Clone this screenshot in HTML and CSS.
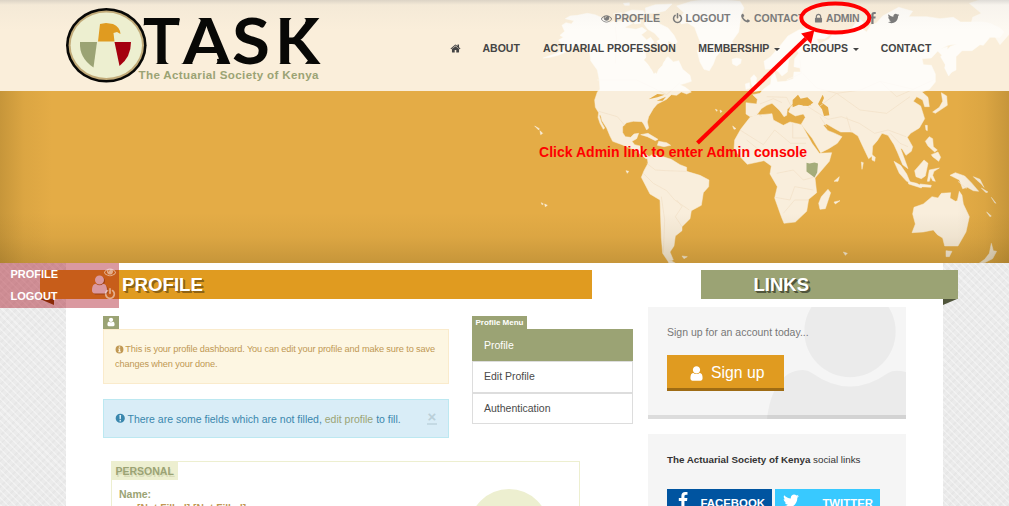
FILE: index.html
```html
<!DOCTYPE html>
<html lang="en">
<head>
<meta charset="utf-8">
<title>TASK - The Actuarial Society of Kenya</title>
<link rel="stylesheet" href="styles.css">
</head>
<body>
<svg class="defs" width="0" height="0">
  <symbol id="user" viewBox="0 0 1792 1792"><path d="M1536 1399q0 109-62.500 187t-150.500 78h-854q-88 0-150.500-78t-62.500-187q0-85 8.500-160.500t31.500-152 58.500-131 94-89 134.500-34.500q131 128 313 128t313-128q76 0 134.500 34.500t94 89 58.500 131 31.500 152 8.500 160.500zm-256-887q0 159-112.500 271.500t-271.500 112.500-271.500-112.500-112.500-271.500 112.500-271.500 271.500-112.500 271.500 112.500 112.500 271.500z"/></symbol>
  <symbol id="facebook" viewBox="0 0 1792 1792"><path d="M1343 12v264h-157q-86 0-116 36t-30 108v189h293l-39 296h-254v759h-306v-759h-255v-296h255v-218q0-186 104-288.500t277-102.500q147 0 228 12z"/></symbol>
  <symbol id="twitter" viewBox="0 0 1792 1792"><path d="M1684 408q-67 98-162 167 1 14 1 42 0 130-38 259.500t-115.500 248.500-184.500 210.500-258 146-323 54.500q-271 0-496-145 35 4 78 4 225 0 401-138-105-2-188-64.500t-114-159.500q33 5 61 5 43 0 85-11-112-23-185.500-111.500t-73.500-205.500v-4q68 38 146 41-66-44-105-115t-39-154q0-88 44-163 121 149 294.500 238.500t371.500 99.500q-8-38-8-74 0-134 94.500-228.500t228.500-94.500q140 0 236 102 109-21 205-78-37 115-142 178 93-10 186-50z"/></symbol>
  <symbol id="lock" viewBox="0 0 1792 1792"><path d="M640 768h512v-192q0-106-75-181t-181-75-181 75-75 181v192zm832 96v576q0 40-28 68t-68 28h-960q-40 0-68-28t-28-68v-576q0-40 28-68t68-28h32v-192q0-184 132-316t316-132 316 132 132 316v192h32q40 0 68 28t28 68z"/></symbol>
  <symbol id="power" viewBox="0 0 1792 1792"><path d="M1664 896q0 156-61 298t-164 245-245 164-298 61-298-61-245-164-164-245-61-298q0-182 80.500-343t226.500-270q43-32 95.500-25t83.500 50q32 42 24.500 94.500t-49.500 84.500q-98 74-151.500 181t-53.500 228q0 104 40.500 198.500t109.500 163.500 163.500 109.500 198.500 40.500 198.500-40.500 163.500-109.500 109.500-163.500 40.500-198.500q0-121-53.500-228t-151.500-181q-42-32-49.500-84.500t24.500-94.500q31-43 84-50t95 25q146 109 226.500 270t80.500 343zm-640-768v640q0 52-38 90t-90 38-90-38-38-90v-640q0-52 38-90t90-38 90 38 38 90z"/></symbol>
  <symbol id="eye" viewBox="0 0 1792 1792"><path d="M1664 960q-152-236-381-353 61 104 61 225 0 185-131.500 316.500t-316.500 131.500-316.500-131.500-131.500-316.500q0-121 61-225-229 117-381 353 133 205 333.500 326.500t434.500 121.500 434.500-121.500 333.500-326.500zm-720-384q0-20-14-34t-34-14q-125 0-214.500 89.500t-89.500 214.500q0 20 14 34t34 14 34-14 14-34q0-86 61-147t147-61q20 0 34-14t14-34zm848 384q0 34-20 69-140 230-376.500 368.500t-499.500 138.500-499.500-139-376.500-368q-20-35-20-69t20-69q140-229 376.500-368t499.500-139 499.500 139 376.500 368q20 35 20 69z"/></symbol>
  <symbol id="home" viewBox="0 0 1792 1792"><path d="M1472 992v480q0 26-19 45t-45 19h-384v-384h-256v384h-384q-26 0-45-19t-19-45v-480q0-1 .5-3t.5-3l575-474 575 474q1 2 1 6zm223-69l-62 74q-8 9-21 11h-3q-13 0-21-7l-692-577-692 577q-12 8-24 7-13-2-21-11l-62-74q-8-10-7-23.500t11-21.500l719-599q32-26 76-26t76 26l244 204v-195q0-14 9-23t23-9h192q14 0 23 9t9 23v408l219 182q10 8 11 21.500t-7 23.500z"/></symbol>
  <symbol id="phone" viewBox="0 0 1792 1792"><path d="M1600 1240q0 27-10 70.500t-21 68.500q-21 50-122 106-94 51-186 51-27 0-53-3.500t-57.500-12.500-47-14.500-55.500-20.500-49-18q-98-35-175-83-127-79-264-216t-216-264q-48-77-83-175-3-9-18-49t-20.500-55.500-14.500-47-12.500-57.500-3.500-53q0-92 51-186 56-101 106-122 25-11 68.500-21t70.500-10q14 0 21 3 18 6 53 76 11 19 30 54t35 63.500 31 53.500q3 4 17.500 25t21.500 35.500 7 28.500q0 20-28.500 50t-62 55-62 53-28.500 46q0 9 5 22.500t8.500 20.500 14 24 11.500 19q76 137 174 235t235 174q2 1 19 11.500t24 14 20.500 8.500 22.500 5q18 0 46-28.500t53-62 55-62 50-28.500q14 0 28.500 7t35.500 21.500 25 17.500q25 15 53.500 31t63.500 35 54 30q70 35 76 53 3 7 3 21z"/></symbol>
  <symbol id="info" viewBox="0 0 16 16"><path fill-rule="evenodd" d="M8 1a7 7 0 1 0 0 14A7 7 0 0 0 8 1zM6.800 2.800h2.400v2.200H6.800zM5.800 6.200h3.500v5h1v1.700H5.800v-1.700h1V7.800h-1z"/></symbol>
  <symbol id="alert" viewBox="0 0 16 16"><path fill-rule="evenodd" d="M8 1a7 7 0 1 0 0 14A7 7 0 0 0 8 1zM6.700 3h2.600l-.3 6H7zM6.900 10.400h2.200v2.400H6.900z"/></symbol>
</svg>

<header class="hero">
  <svg class="map" viewBox="0 0 1009 263">
    <g transform="translate(500 0) scale(.33333)" fill="#f9eedc" stroke="#f9eedc" stroke-width="1.500" stroke-linejoin="round">
      <path d="M186 76L198 68L214 72L222 62L196 56L210 48L232 46L262 40L285 44L316 58L330 68L342 62L352 72L380 84L408 88L426 82L440 92L424 104L440 120L452 112L462 126L450 142L436 158L440 186L452 206L470 222L476 208L488 196L492 180L504 170L520 186L536 182L548 208L570 226L574 244L556 250L540 254L556 262L574 276L560 282L544 276L530 286L514 284L500 298L472 312L460 326L446 350L442 366L446 384L440 390L432 374L426 365L400 364L380 368L368 380L368 398L376 410L392 412L402 402L416 400L410 416L396 424L404 434L420 438L426 458L442 466L450 474L438 476L420 462L404 450L380 440L366 434L338 424L330 408L320 384L306 362L302 346L298 346L304 366L314 384L310 388L300 370L294 352L296 338L286 322L284 300L292 276L300 268L298 240L292 210L272 182L270 162L262 142L246 134L234 136L218 142L198 156L174 166L150 172L130 174L174 158L198 144L188 136L176 120L190 112L180 106L194 94Z"/>
      <path d="M340 42l24-4 8 12-20 8zM374 38l22-8 34 2 6 14-20 4-14-8-14 6zM436 24l30-10 50-2-20 20-30 8-28 0zM350 66l30-6 18 10-24 12-18-2zM400 60l20-2 2 12-18 2zM444 56l20 2 16 14 24 12 18 22 10 20-8 8-20-12 0 16-22-2-12-12 10-6-16-18-20-12-12-16z"/>
      <path d="M530 18L575 4L640 -4L720 4L732 24L724 44L720 68L716 96L696 124L700 132L668 148L648 170L640 192L628 212L612 208L600 186L592 154L602 130L592 104L584 82L562 68L544 72L536 56L552 38Z"/>
      <path d="M696 178l14-4 14 4-2 12-12 8-12-6zM752 234l10-10 8 10-2 12 10 14 0 12-20 4-6-4 8-10-6-10zM736 252l12-4 2 16-12 4z"/>
      <path d="M738 308L770 312L772 298L758 284L780 280L790 268L812 252L814 232L824 220L832 246L858 244L880 236L882 216L902 216L900 204L882 200L884 176L896 160L888 144L866 180L862 216L846 228L834 214L820 206L796 208L792 184L812 170L838 140L864 108L896 90L924 84L946 98L990 104L974 116L950 116L956 132L986 118L1002 98L1040 92L1056 84L1076 56L1090 66L1084 84L1100 96L1112 76L1130 68L1148 48L1196 22L1238 34L1226 50L1280 50L1320 56L1360 52L1382 66L1448 66L1470 70L1500 84L1512 96L1500 112L1470 112L1450 136L1440 134L1416 152L1386 152L1368 170L1368 210L1344 222L1336 194L1322 170L1350 140L1370 132L1344 136L1316 150L1294 174L1266 176L1270 194L1294 196L1306 222L1306 246L1288 268L1266 276L1284 292L1288 320L1274 320L1268 300L1250 290L1240 304L1262 318L1274 356L1258 384L1232 400L1222 412L1238 440L1234 454L1218 466L1206 446L1202 446L1216 484L1224 506L1208 494L1192 456L1182 434L1164 406L1146 400L1132 422L1118 438L1116 468L1106 476L1086 434L1074 408L1056 396L1022 396L1004 386L980 372L970 376L984 392L1000 398L1026 410L1012 430L986 446L962 458L936 414L910 382L904 372L916 352L910 342L886 348L866 336L872 320L892 306L910 318L934 316L928 302L906 296L884 306L862 328L860 346L852 350L838 330L818 308L822 304L846 328L842 334L816 310L800 316L784 326L770 346L750 350L738 342Z"/>
      <path d="M750 352L764 346L816 341L820 360L850 376L870 366L905 374L936 430L958 460L995 458L988 484L945 534L950 578L926 598L920 634L886 666L852 670L844 650L824 594L832 560L810 522L814 498L792 482L742 493L722 472L702 448L704 420L722 388Z"/>
      <path d="M442 474L456 464L476 466L514 478L540 494L560 502L560 514L600 526L627 540L626 560L610 578L604 616L574 632L570 656L546 680L546 692L526 708L522 738L510 756L520 780L504 784L488 760L484 714L480 600L450 582L424 532L432 512L444 490Z"/>
      <path d="M504 784l10-2 16 10-20 4zM964 590l20-22 8 10-16 48-16 2-4-18zM1182 484l20 12 18 26 10 24-10-2-22-24zM1224 544l26 6 16 8-2 6-38-12zM1244 512l28-32 12 10-8 38-12 8-16-6zM1288 510l30-6-16 10-4 12 8 18-8-2-6-12-4 14-6 0zM1350 526l16-8 28 10 20 20 22 26-16-2-18-10-14 4-10-26zM1276 424l12-14 10 6 2 24 12 10-8 6-20-18zM1294 464l20-8 8 16-6 12-18-14zM1260 552l34 4-2 6-30-2z"/>
      <path d="M1242 622L1270 612L1296 590L1314 594L1324 580L1352 578L1350 594L1366 604L1372 602L1378 574L1386 586L1390 612L1408 650L1398 696L1374 738L1334 738L1328 714L1312 704L1300 690L1270 696L1236 698L1246 672L1238 642Z"/>
      <path d="M1338 752l18 2-8 16-10 0zM1474 730l6 22 10 2-12 22-24 12-20 4 20-14 14-18zM1324 278l16 10 2 28-18 12-18 12-8-4 20-14 10-18zM1276 376l6 0 0 16-4-2zM1116 464l10 8-2 12-8-4zM422 404l22-4 30 18-8 4-24-12zM476 424l24 4 12 8-20 4-20-4zM104 378l14 8-2 4zM120 392l8 8-6 4zM378 512l8 2-4 6zM124 608l6 4-4 2zM134 612l8 4-6 4zM546 768l16 2-10 6zM1030 756l12 4-6 6zM1084 486l6 2-4 20zM1002 544l16-14-4 14zM1002 606l18-4-14 10zM646 328l6 2-2 4zM660 330l6 4-4 4zM698 378l10 8-6 2zM1420 530l20 8 12 24-8-10-14-12zM1444 564l20 12-6 2zM1474 592l14 18-4-2zM1460 636l14 12-4 2zM370 10l18-2 0 8-14 0z"/>
      <path d="M1310 150l32-10 0 20 18 20 4 24-18 24-12-24 6-24z"/>
      <path d="M1408 10l30-10h92v100l-30 34-18-28-30-22-40-8 6-24 26-12z" opacity=".8"/>
    </g>
    <g transform="translate(500 0) scale(.33333)" class="seas">
      <path d="M444 166l26-8 30 0-4 22-20 24-14 18-12-24-18-18zM954 312l14-28 4 10-6 14 18 14 4 24-16 2-6-20zM878 300l16-16 8 12 20-4 18 16-16 10-28-4-18 8zM446 298l26-16 22 2-22 8zM470 302l28-12-10 12z"/>
    </g>
    <g transform="translate(500 0) scale(.33333)" class="borders">
      <path d="M292 240L410 240L460 264L500 284L540 248M296 334L352 350L374 376M346 80L350 120L346 190M440 490L466 510L498 512L558 514M430 520L460 550L500 572L524 600L568 630M484 590L494 660L490 760M530 600L546 620L526 650L546 680M720 390L790 434L824 390L872 430L918 430M740 420L790 460L850 464L918 476M878 370L878 414L922 414M830 520L880 510L910 540L948 530M826 592L870 600L884 560L940 570M850 640L884 600L926 600M924 320L984 358L1024 350L1078 370L1124 400L1164 390L1218 410M960 318L1010 280L1082 270L1140 244L1240 268L1300 240M1010 280L1080 330L1160 340L1230 290M1170 400L1200 430L1224 440M770 340L786 350M800 290L860 292L872 316M860 240L904 220L900 180M908 220L950 264L1010 280M780 312L820 296L846 308M960 350L980 380M1140 244L1190 290L1240 268M1040 350L1054 398M1374 544L1400 566"/>
    </g>
    <path class="kenya" d="M806.500 162.800l3 .8 5-1 3.500 1-.8 9-2.700 5-8-6z"/>
  </svg>
  <div class="topbar">
    <svg class="logo" viewBox="0 0 270 91" width="270" height="91">
      <ellipse cx="40.300" cy="45.300" rx="40.300" ry="37.300" fill="#080806"/>
      <ellipse cx="40.300" cy="45.300" rx="37.700" ry="34.800" fill="#c2ab79"/>
      <ellipse cx="40.300" cy="45.300" rx="35.700" ry="32.800" fill="#edefd0"/>
      <path fill="#e09b20" d="M34 24l6-1 7 1q7 3 7.500 10l-3.500-2-3.500 1 1 8.500H32z"/>
      <path fill="#9ba374" d="M14 42h17l-3.500 25.500Q13 58 14 42z"/>
      <path fill="#a5000f" d="M48.500 42H65q0 15-11.500 24z"/>
      <text class="wordmark" y="64" font-size="63"><tspan x="77" textLength="37" lengthAdjust="spacingAndGlyphs">T</tspan><tspan x="117" textLength="47" lengthAdjust="spacingAndGlyphs">A</tspan><tspan x="166" textLength="38" lengthAdjust="spacingAndGlyphs">S</tspan><tspan x="209" textLength="45" lengthAdjust="spacingAndGlyphs">K</tspan></text>
      <path class="serifs" d="M77.500 25.500l2-7h34.500l-1.500 7-4-1.500H82zM89.500 64q4-1 4.500-5h5q1 4 4 5zM115 64q4-1 6-6l5 1q-1 4 1 5zM150 64q2-1 1-5l7-1q3 5 5.500 6zM132 18q3 1 3 4l10 0-1-4zM213 18q4 1 4.500 6h4q1-4 4-6zM213 64q4-1 4.500-6h4q1 5 4 6zM238 18q3 1 1 5h5q2-4 6.500-5zM239 64l5-6q5 5 11 5.500z"/>
      <text class="tagline" x="72.500" y="78.500" textLength="180">The Actuarial Society of Kenya</text>
    </svg>
    <div class="navs">
      <div class="utility">
        <span class="u1"><svg><use href="#eye"/></svg>PROFILE</span>
        <span class="u2"><svg><use href="#power"/></svg>LOGOUT</span>
        <span class="u3"><svg><use href="#phone"/></svg>CONTACT</span>
        <span class="u4"><svg><use href="#lock"/></svg>ADMIN</span>
        <svg class="fb"><use href="#facebook"/></svg>
        <svg class="tw"><use href="#twitter"/></svg>
      </div>
      <nav class="mainnav">
        <svg><use href="#home"/></svg>
        <span class="n1">ABOUT</span>
        <span class="n2">ACTUARIAL PROFESSION</span>
        <span class="n3">MEMBERSHIP<i></i></span>
        <span class="n4">GROUPS<i></i></span>
        <span class="n5">CONTACT</span>
      </nav>
    </div>
  </div>
</header>

<main class="page">
  <section class="content">
    <h2 class="ribbon orange"><svg><use href="#user"/></svg>PROFILE</h2>
    <div class="columns">
      <div class="alerts">
        <span class="tag usertag"><svg><use href="#user"/></svg></span>
        <div class="warning"><svg><use href="#info"/></svg> This is your profile dashboard. You can edit your profile and make sure to save<br>changes when your done.</div>
        <div class="notice"><svg><use href="#alert"/></svg><span>There are some fields which are not filled, <a>edit profile</a> to fill.</span><b>×</b></div>
      </div>
      <div class="menu">
        <span class="tag">Profile Menu</span>
        <div class="item active">Profile</div>
        <div class="item">Edit Profile</div>
        <div class="item">Authentication</div>
      </div>
    </div>
    <div class="personal">
      <div class="fields">
        <h3>PERSONAL</h3>
        <strong>Name:</strong>
        <em>[Not Filled] [Not Filled]</em>
      </div>
      <div class="avatar"></div>
    </div>
  </section>
  <aside class="links">
    <h2 class="ribbon green">LINKS</h2>
    <div class="card signup">
      <svg class="silhouette" viewBox="0 0 258 112"><circle cx="202" cy="24.500" r="45.700"/><path d="M119 112C122 85 133 63 155 63Q160 63 164 66Q202 93 240 66Q246 62 258 65V112Z"/></svg>
      <p>Sign up for an account today...</p>
      <div class="button"><svg><use href="#user"/></svg>Sign up</div>
    </div>
    <div class="card social">
      <p><b>The Actuarial Society of Kenya</b> social links</p>
      <div class="buttons">
        <span class="facebook"><svg><use href="#facebook"/></svg>FACEBOOK</span>
        <span class="twitter"><svg><use href="#twitter"/></svg>TWITTER</span>
      </div>
    </div>
  </aside>
</main>

<div class="quick">
  <div>PROFILE<svg><use href="#eye"/></svg></div>
  <div>LOGOUT<svg><use href="#power"/></svg></div>
</div>

<svg class="annotation" width="1009" height="263" viewBox="0 0 1009 263">
  <ellipse cx="835.300" cy="18" rx="34" ry="14.500"/>
  <path class="shaft" d="M697.500 143L806 38.500"/>
  <path class="head" d="M813 31.500L810.500 42 803 34z"/>
  <text x="539" y="157" textLength="268">Click Admin link to enter Admin console</text>
</svg>
</body>
</html>
```
FILE: styles.css
```css
* { box-sizing: border-box; }
body {
  margin: 0;
  height: 506px;
  overflow: hidden;
  position: relative;
  font: 10.5px "Liberation Sans", Arial, sans-serif;
  color: #4a4a4a;
  background:
    repeating-linear-gradient(45deg, rgba(255,255,255,.35) 0 1.5px, transparent 1.5px 5px),
    repeating-linear-gradient(-45deg, rgba(0,0,0,.018) 0 2px, transparent 2px 6px),
    #ebebeb;
}
svg { fill: currentColor; flex: none; }
.defs { position: absolute; }
h2, h3, p { margin: 0; }

.hero { position: relative; height: 263px; background: #e4ac46; }
.hero::after {
  content: "";
  position: absolute;
  inset: 0;
  pointer-events: none;
  background:
    linear-gradient(to top, rgba(80,60,10,.2), rgba(80,60,10,.06) 26px, transparent 50px),
    linear-gradient(to right, rgba(80,60,10,.2), rgba(80,60,10,.06) 24px, transparent 52px),
    linear-gradient(to left, rgba(80,60,10,.2), rgba(80,60,10,.06) 24px, transparent 52px);
  clip-path: inset(91px 0 0 0);
}
.map { position: absolute; inset: 0; width: 1009px; height: 263px; }
.seas { fill: #e4ac46; }
.borders { fill: none; stroke: #f1dfc6; stroke-width: 2; }
.kenya { fill: #a4ac7a; }
.topbar {
  position: relative;
  display: flex;
  height: 91px;
  padding-left: 66px;
  background: linear-gradient(rgba(150,150,150,.3), rgba(180,180,180,.08) 5px, transparent 30px), rgba(255,255,255,.8);
}
.wordmark { font-family: Lato, sans-serif; font-weight: 700; fill: #080806; }
.serifs { fill: #080806; }
.tagline { font: bold 11.6px "Liberation Sans", Arial, sans-serif; fill: #9ba374; }
.navs { font-weight: bold; white-space: nowrap; }
.utility, .mainnav { display: flex; align-items: center; }
.utility { color: #7b7b7b; height: 14px; margin: 11px 0 0 264.500px; }
.utility span { display: flex; align-items: center; }
.utility svg { width: 11px; height: 11px; margin-right: 3px; }
.u1 { width: 71px; }
.u2 { width: 68.500px; }
.u3 { width: 73px; }
.u4 { width: 53px; letter-spacing: -.2px; }
.u4 svg { margin-right: 2px; }
.utility .fb { width: 13px; height: 13px; margin-right: 8px; }
.utility .tw { width: 13px; height: 13px; margin: 0; }
.mainnav { color: #444; height: 14px; margin: 16px 0 0 113.5px; }
.mainnav svg { width: 11px; height: 11px; margin-right: 22px; }
.n1 { width: 60.500px; }
.n2 { width: 155.200px; }
.n3 { width: 104.300px; }
.n4 { width: 78.300px; }
.mainnav i {
  display: inline-block;
  margin-left: 5px;
  vertical-align: 1px;
  border: 3px solid transparent;
  border-top-color: currentColor;
  border-bottom: 0;
}

.page { display: flex; width: 877px; height: 243px; margin-left: 66px; background: #fff; }
.content { width: 582px; padding: 7px 0 0 37px; }
.ribbon {
  position: relative;
  display: flex;
  align-items: center;
  height: 29px;
  color: #fff;
  font-size: 18.7px;
}
.ribbon::after { content: ""; position: absolute; top: 29px; width: 14px; height: 6px; }
.orange {
  width: 552px;
  margin-left: -63px;
  padding-left: 48.500px;
  background: #e09b20;
  text-shadow: 1px 1px #8f6314, 2px 2px #8f6314;
}
.orange::after { left: 0; background: #7b4600; clip-path: polygon(0 0, 100% 0, 100% 100%); }
.orange svg { width: 21px; height: 21px; margin-right: 12.500px; filter: drop-shadow(1px 1px #9d6c16); }
.green {
  width: 257px;
  margin-left: 53px;
  padding-left: 52.500px;
  background: #9ba374;
  font-size: 18.5px;
  text-shadow: 1px 1px #50553b, 2px 2px #50553b;
}
.green::after { right: 1px; background: #50553b; clip-path: polygon(0 0, 100% 0, 0 100%); }
.columns { display: flex; gap: 23px; height: 145px; margin-top: 17px; }
.alerts { width: 346px; }
.tag { display: block; height: 13px; background: #9ba374; color: #fff; }
.usertag { width: 16px; padding: 1px 3px; }
.usertag svg { display: block; width: 10px; height: 10px; }
.warning {
  height: 55px;
  padding: 12px 11px 0;
  border: 1px solid #faebcc;
  background: #fdf6e2;
  color: #c09853;
  font-size: 9.2px;
  letter-spacing: -.12px;
  line-height: 15px;
  white-space: nowrap;
}
.warning svg { width: 9px; height: 9px; vertical-align: -1.500px; margin-right: -1px; }
.notice {
  display: flex;
  align-items: center;
  height: 39px;
  margin-top: 15px;
  padding: 0 11px;
  border: 1px solid #bce8f1;
  background: #d9edf7;
  color: #3a87ad;
  white-space: nowrap;
}
.notice svg { width: 10.500px; height: 10.500px; margin-right: 2px; }
.notice a { color: #9ba374; }
.notice b { width: 10px; height: 13px; margin-left: auto; font-size: 15px; line-height: 9px; text-align: center; color: #bacfd9; border-bottom: 2px solid #c4dae4; }
.menu { width: 161px; }
.menu .tag { width: 55px; padding: 2px 0 0 3.500px; font-size: 8px; font-weight: bold; line-height: 9px; white-space: nowrap; }
.item { height: 32px; padding-left: 11px; border: 1px solid #ddd; line-height: 30px; }
.item + .item { height: 31.500px; line-height: 28px; }
.active { border-color: #9ba374; background: #9ba374; color: #fff; }
.personal {
  display: flex;
  justify-content: space-between;
  width: 469px;
  height: 45px;
  margin-left: 8px;
  padding-right: 30px;
  border: solid #edefd0;
  border-width: 1px 1px 0;
  overflow: hidden;
}
.fields { color: #9ba374; white-space: nowrap; }
.personal h3 { width: 66px; height: 18px; padding-left: 3.500px; background: #edefd0; font-size: 10.5px; line-height: 18px; text-shadow: 1px 2px #d9dcb9; }
.fields strong { display: block; margin: 8px 0 0 7px; line-height: 12px; font-size: 10.500px; }
.fields em { display: block; margin: 3px 0 0 25px; font: bold 10.2px/12px "Liberation Sans", Arial, sans-serif; color: #c09853; }
.avatar { width: 80px; height: 80px; margin-top: 27px; border-radius: 50%; background: #edefd0; }

.links { width: 295px; padding-top: 7px; }
.card { position: relative; width: 258px; background: #f5f5f5; }
.signup { height: 112px; margin-top: 8px; padding: 19px; border-bottom: 4px solid #dcdcdc; color: #777; }
.silhouette { position: absolute; top: 0; left: 0; width: 258px; height: 112px; fill: rgba(0,0,0,.04); overflow: hidden; }
.signup p { position: relative; line-height: 12px; font-size: 10.5px; }
.button { position: relative; display: flex; align-items: center; width: 117px; height: 36px; margin-top: 17px; padding: 3px 0 0 21px; border-bottom: 3px solid #9f6c14; background: #e09b20; color: #fff; font-size: 15.75px; }
.button svg { width: 17px; height: 17px; margin-right: 6px; }
.social { height: 90px; margin-top: 15px; padding: 19px; color: #333; font-size: 9.8px; white-space: nowrap; }
.social p { line-height: 14px; }
.buttons { display: flex; gap: 3px; margin-top: 22px; }
.buttons span { display: flex; align-items: center; justify-content: space-between; width: 105px; height: 27px; padding: 1px 7px 0; color: #fff; font-size: 11.4px; font-weight: bold; }
.buttons svg { width: 18px; height: 18px; margin-top: -5px; }
.facebook { background: #0054a0; }
.twitter { background: #38c9ff; }

.quick { position: absolute; top: 263px; left: 0; width: 119px; height: 45px; padding-left: 10.500px; background: rgba(162,0,17,.4); color: #fff; font-size: 11px; font-weight: bold; }
.quick div { display: flex; justify-content: space-between; height: 22px; line-height: 22px; padding-right: 3px; }
.quick svg { width: 12px; height: 12px; margin-top: 3px; opacity: .5; }
.annotation { position: absolute; top: 0; left: 0; fill: red; }
.annotation ellipse { fill: none; stroke: red; stroke-width: 4; }
.annotation .shaft { stroke: red; stroke-width: 4; }
.annotation .head { stroke: red; stroke-width: 2; }
.annotation text { font: bold 14px "Liberation Sans", Arial, sans-serif; }
```
